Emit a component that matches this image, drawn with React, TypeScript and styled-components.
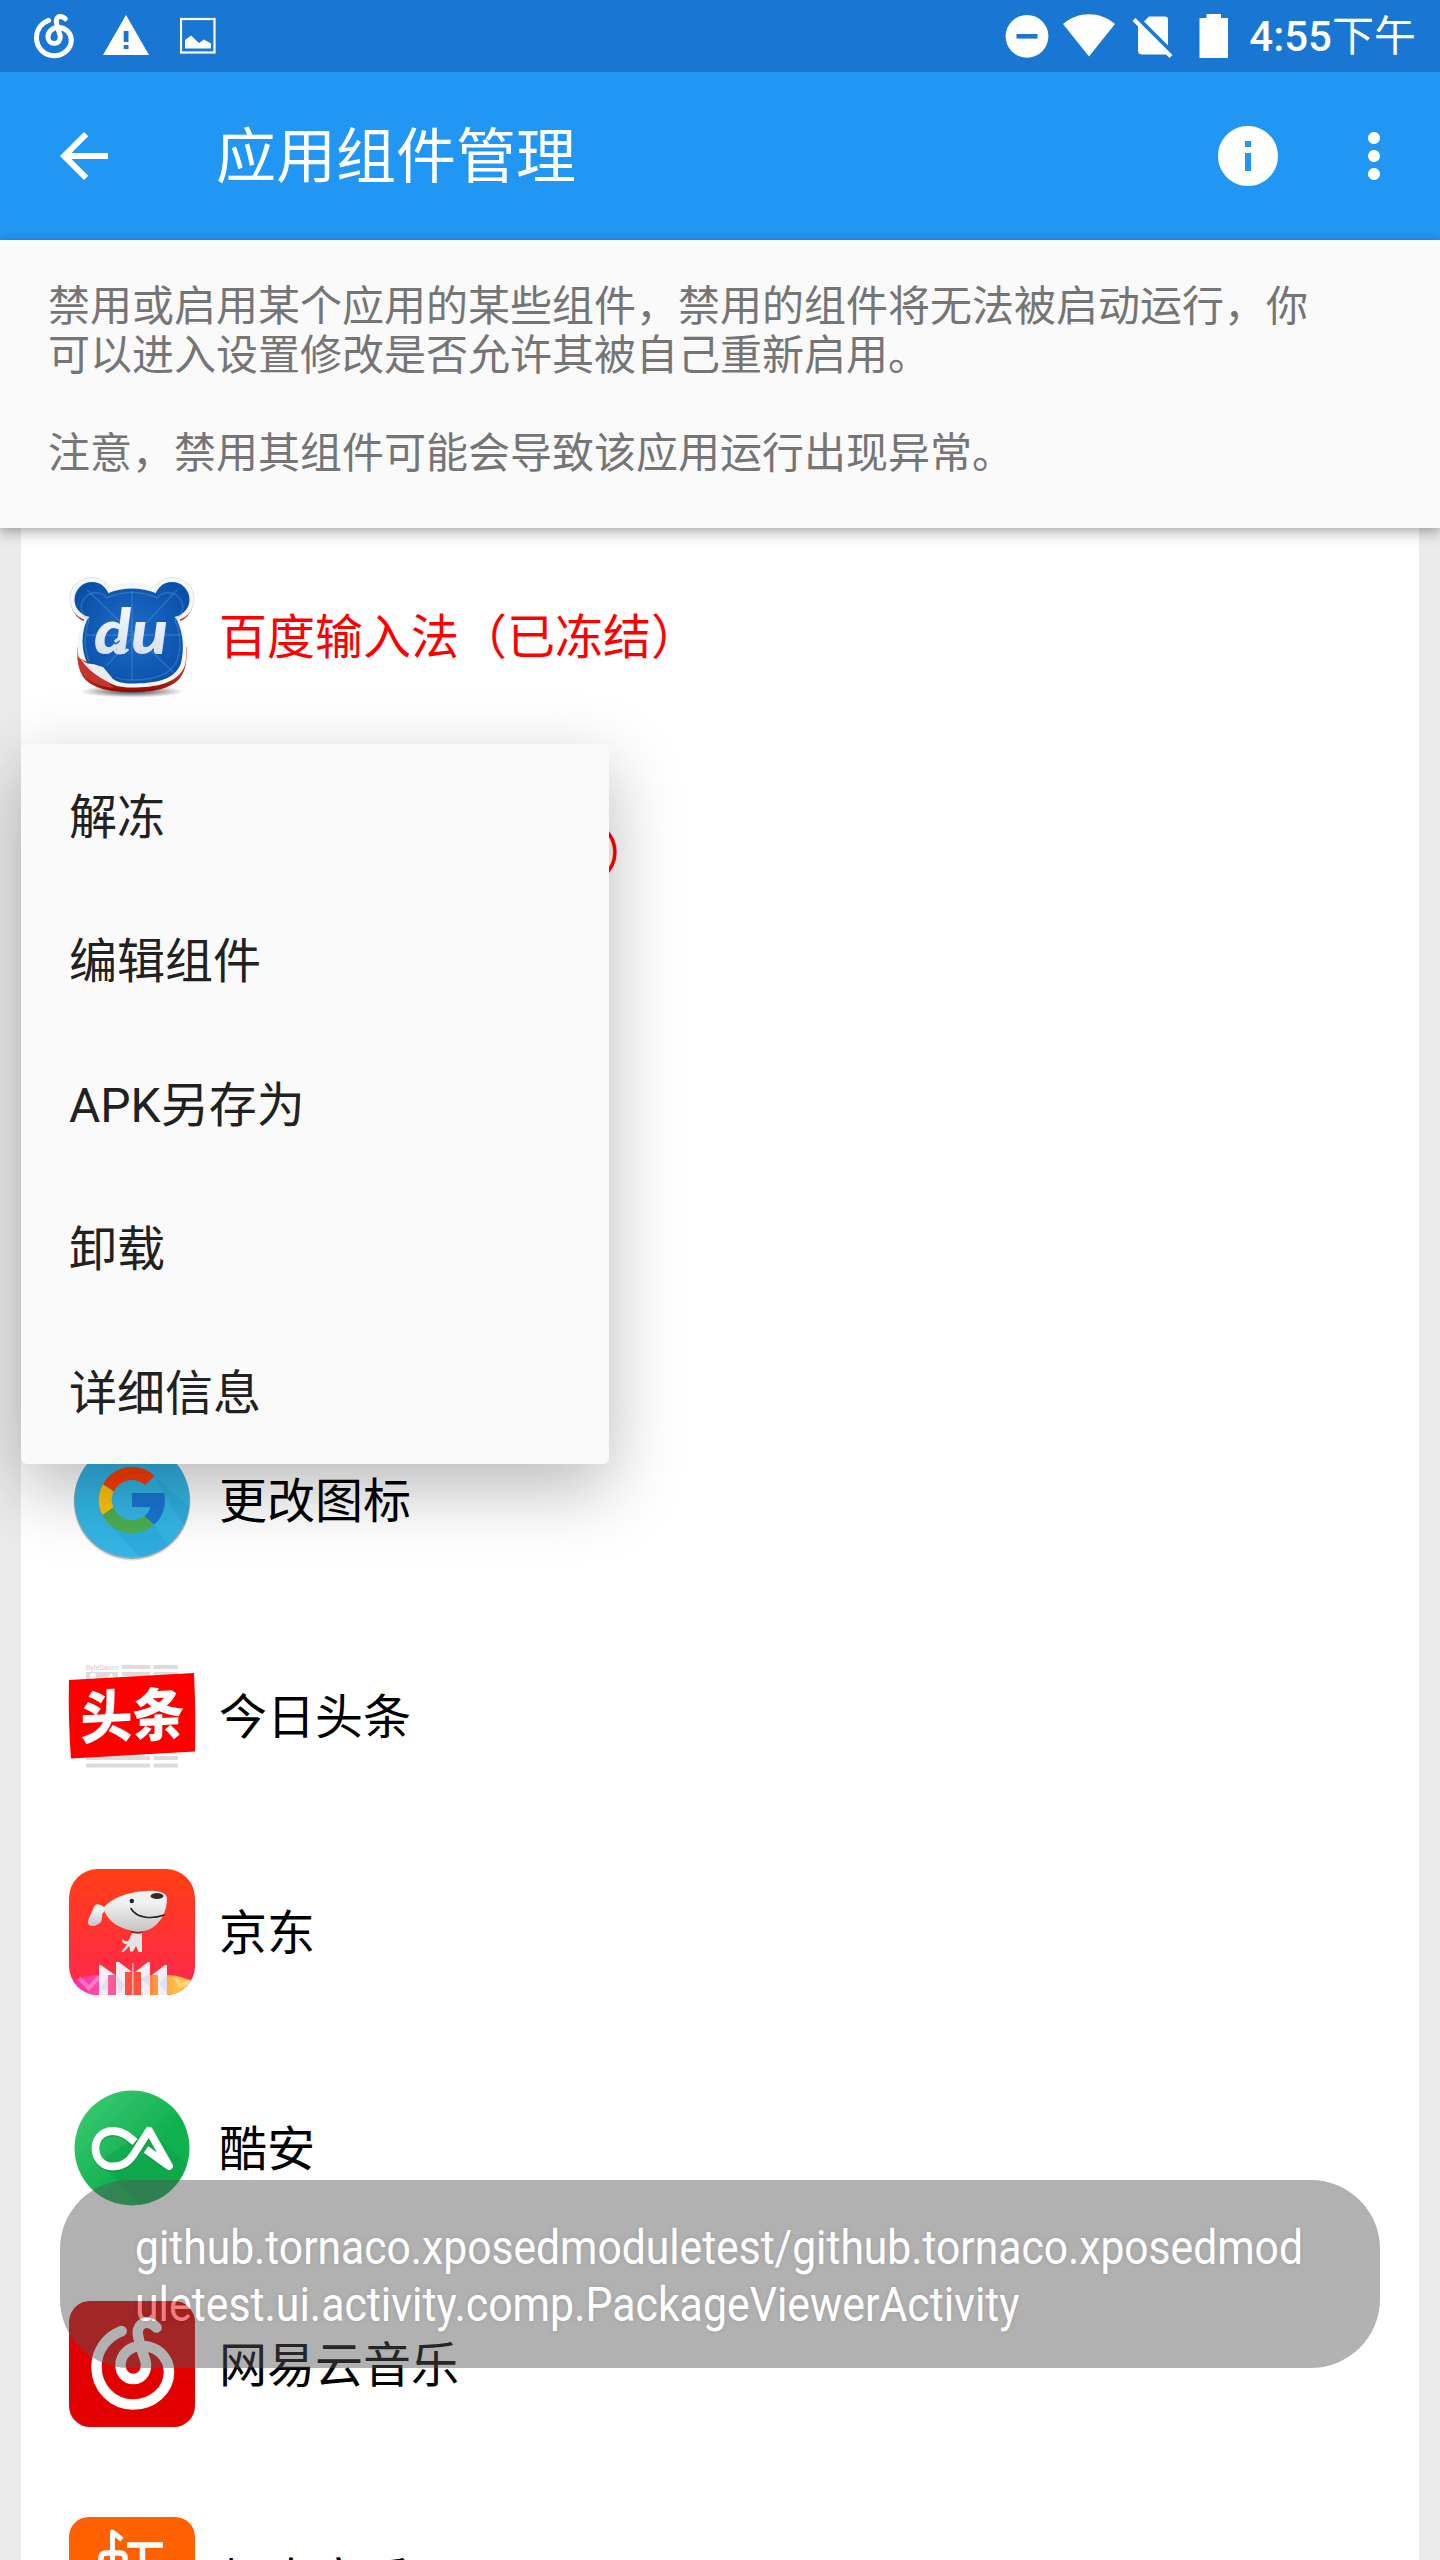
import React from "react";
import styled, { createGlobalStyle } from "styled-components";

const GlobalStyle = createGlobalStyle`
  * { box-sizing: border-box; }
  body { margin: 0; background: #ebebeb; }
`;

const Screen = styled.div`
  position: relative;
  display: flex;
  flex-direction: column;
  width: 1440px;
  height: 2560px;
  overflow: hidden;
  background: #ebebeb;
  font-family: Roboto, "Noto Sans CJK SC", sans-serif;
  color: #000;
`;

const StatusBar = styled.header`
  display: flex;
  flex: none;
  align-items: center;
  justify-content: space-between;
  height: 72px;
  padding: 0 24px 0 30px;
  background: #1976d2;
  color: #fff;
`;

const StatusGroup = styled.div<{ $gap: number }>`
  display: flex;
  align-items: center;
  gap: ${(p) => p.$gap}px;
`;

const Clock = styled.span`
  margin-left: 7px;
  padding-top: 2px;
  font-size: 42px;
  font-weight: 500;
  line-height: 72px;
  white-space: nowrap;
`;

const Meridiem = styled.span`
  font-weight: 400;
`;

const Toolbar = styled.nav`
  display: flex;
  flex: none;
  align-items: center;
  height: 168px;
  padding: 0 30px 0 48px;
  background: #2196f3;
  color: #fff;
`;

const Title = styled.h1`
  flex: 1;
  margin: 0 0 0 96px;
  padding-top: 4px;
  font-size: 60px;
  font-weight: 400;
  line-height: 72px;
`;

const Actions = styled.div`
  display: flex;
  gap: 54px;
`;

const Icon = styled.svg<{ $before?: number; $after?: number }>`
  display: block;
  flex: none;
  margin-left: ${(p) => p.$before ?? 0}px;
  margin-right: ${(p) => p.$after ?? 0}px;
  fill: currentColor;
`;

const Notice = styled.section`
  position: relative;
  z-index: 1;
  flex: none;
  height: 288px;
  padding: 42px 48px;
  background: #fafafa;
  box-shadow: 0 6px 12px rgba(0, 0, 0, 0.25), 0 0 6px rgba(0, 0, 0, 0.12);
  color: #757575;
  font-size: 42px;
  line-height: 49px;
`;

const Paragraph = styled.p`
  width: 1300px;
  margin: 0 0 49px;
`;

const List = styled.ul`
  flex: none;
  margin: 0 21px;
  padding: 0;
  background: #fff;
  list-style: none;
`;

const Row = styled.li`
  display: flex;
  align-items: center;
  gap: 24px;
  height: 216px;
  padding-left: 48px;
`;

const Label = styled.span<{ $frozen?: boolean; $indent?: number }>`
  padding-top: 4px;
  padding-left: ${(p) => p.$indent ?? 0}px;
  color: ${(p) => (p.$frozen ? "#ff0000" : "#000")};
  font-size: 48px;
  line-height: 56px;
  white-space: nowrap;
`;

const AppIcon = styled.svg`
  display: block;
  flex: none;
  width: 126px;
  height: 126px;
  overflow: visible;
`;

const Menu = styled.div`
  position: absolute;
  z-index: 2;
  top: 744px;
  left: 21px;
  width: 588px;
  border-radius: 6px;
  background: #fafafa;
  box-shadow: 0 24px 72px rgba(0, 0, 0, 0.28);
`;

const MenuItem = styled.div`
  display: flex;
  align-items: center;
  height: 144px;
  padding: 4px 48px 0;
  color: #212121;
  font-size: 48px;
  line-height: 56px;
`;

const Toast = styled.div`
  position: absolute;
  z-index: 3;
  top: 2180px;
  left: 60px;
  width: 1320px;
  height: 188px;
  padding: 39px 75px 35px;
  border-radius: 69px;
  background: rgba(85, 85, 85, 0.9);
  color: #fff;
  font-family: Roboto, sans-serif;
  font-size: 48px;
  line-height: 57px;
  text-shadow: 0 0 6px rgba(0, 0, 0, 0.4);
  opacity: 0.5;
`;

const ToastLine = styled.div<{ $squeeze: number }>`
  width: max-content;
  white-space: nowrap;
  transform: scaleX(${(p) => p.$squeeze});
  transform-origin: left;
`;

const cloudLoop =
  "M52.7 30 C37 36 27.5 50 27.5 66 C27.5 87 44 103.5 64 103.5 C84 103.5 100 89 100 71 C100 56 88 45 73 45 C60 45 51.5 54 51.5 64.5 C51.5 72 57 78 64.5 78 C72 78 77 72 77 64 C77 58 73 52 70.5 41 C69 35 68 32 69 29 C71 21 80 19 87.5 26.5";

const CloudMusicStatus = () => (
  <Icon width="48" height="48" viewBox="14 12.5 100 100">
    <path d={cloudLoop} fill="none" stroke="currentColor" strokeWidth="10.5" strokeLinecap="round" />
  </Icon>
);

const WarningStatus = () => (
  <Icon width="46" height="48" viewBox="0 0 46 48">
    <path fillRule="evenodd" d="M23 3 L46 43 H0Z M20.7 19 V30 H25.5 V19Z M20.7 33 V37 H25.5 V33Z" />
  </Icon>
);

const ImageStatus = () => (
  <Icon $before={6} width="36" height="48" viewBox="0 0 36 48">
    <rect x="1" y="7" width="33.5" height="33.5" fill="none" stroke="currentColor" strokeWidth="2.2" />
    <path d="M5 36.5 V28 L11 23.5 L19 31 L24 27.5 L31 31.5 V36.5Z" />
  </Icon>
);

const DoNotDisturb = () => (
  <Icon width="44" height="48" viewBox="0 0 44 48">
    <circle cx="22" cy="24.3" r="21.4" />
    <path d="M11.5 24.3 H32.5" stroke="#1976d2" strokeWidth="4.6" />
  </Icon>
);

const Wifi = () => (
  <Icon width="54" height="48" viewBox="0 0 54 48">
    <path d="M1 12 C16 -1 38 -1 53 12 L27 44.5Z" />
  </Icon>
);

const NoSim = () => (
  <Icon $before={3} $after={12} width="42" height="48" viewBox="0 0 42 48">
    <path d="M12 9.5 L17 4.5 H33 Q36 4.5 36 7.5 V33.5Z M6 14 L34.5 42.5 H10 Q6 42.5 6 38.5Z" />
    <path d="M2 7.5 L39 44.5" fill="none" stroke="currentColor" strokeWidth="4" />
  </Icon>
);

const Battery = () => (
  <Icon width="30" height="48" viewBox="0 0 30 48">
    <path d="M7.5 2 H22 V6 H29 V46 H.5 V6 H7.5Z" />
  </Icon>
);

const BaiduIcon = () => (
  <AppIcon viewBox="0 0 126 126">
    <defs>
      <radialGradient id="bdBlue" gradientUnits="userSpaceOnUse" cx="63" cy="58" r="64">
        <stop offset="0" stopColor="#1c6cc8" />
        <stop offset="1" stopColor="#0a4fa8" />
      </radialGradient>
      <linearGradient id="bdRed" x1="0" y1="0" x2="0" y2="1">
        <stop offset="0.6" stopColor="#c9302a" />
        <stop offset="1" stopColor="#920800" />
      </linearGradient>
      <linearGradient id="bdText" x1="0" y1="0" x2="0" y2="1">
        <stop offset="0" stopColor="#fff" />
        <stop offset="1" stopColor="#cfdcf0" />
      </linearGradient>
      <radialGradient id="bdShadow">
        <stop offset="0" stopColor="#000" stopOpacity="0.75" />
        <stop offset="1" stopColor="#000" stopOpacity="0" />
      </radialGradient>
    </defs>
    <ellipse cx="63" cy="118.5" rx="52" ry="6" fill="url(#bdShadow)" />
    <g fill="#b3201a">
      <circle cx="22.5" cy="29" r="20.5" />
      <circle cx="103.500" cy="29" r="20.5" />
    </g>
    <path d="M8.500 74 C8 88 9 97 15 105 C24 116 42 119 63 119 C84 119 102 116 111 105 C117 97 118 88 117.500 74Z" fill="url(#bdRed)" />
    <g fill="#f5f6f8">
      <circle cx="22.5" cy="26" r="22" fill="#dedede" />
      <circle cx="103.500" cy="26" r="22" fill="#dedede" />
      <circle cx="22.5" cy="26" r="21.3" />
      <circle cx="103.500" cy="26" r="21.3" />
      <path d="M41 13.500 C54 8.500 72 8.500 85 13.500 L111 47 C117 62 119 80 116 92 C109 111 86 114.500 63 114.500 C50 114.500 44 112 38 107 L28 97 L10.500 87 C6.500 74 8.500 60 15 47Z" />
    </g>
    <g fill="url(#bdBlue)">
      <circle cx="23" cy="26.500" r="17.500" />
      <circle cx="103" cy="26.500" r="17.500" />
      <path d="M39.500 20 C54 14 72 14 86.500 20 L108 47 C115 62 115 78 112 90 C106 108 84 110.500 63 110.500 C54 110.500 48 109 44 106 L34 94 L18 90 C12 76 12 60 18 47Z" />
    </g>
    <g fill="none" stroke="#5a9be0" strokeOpacity=".38" strokeWidth="1.4">
      <path d="M63 18 V107 M17 62 H112 M18 17 L105 100 M108 17 L38 92" />
      <path d="M20 47 A14.500 14.500 0 1 1 38 25 C54 18 72 18 88 25 A14.500 14.500 0 1 1 106 47 C112 62 112 76 108 87 C102 103 84 107 63 107 Q52 107 47 104 M20 47 C15 62 15 76 20 88" />
    </g>
    <path d="M8.500 84 C10 102 22 113 45 115 C37 107 27 100 24 92Z" fill="#c5342e" />
    <path d="M9 82 C17 96 30 106 50 114 C40 107 38 92 22 91 C17 91 13 88 9 82Z" fill="#e9ecf0" />
    <text x="25" y="81" fontFamily="Lato, sans-serif" fontStyle="italic" fontWeight="900" fontSize="63" textLength="74" lengthAdjust="spacingAndGlyphs" fill="url(#bdText)">du</text>
    <path d="M44 66 L53 67 L47 75Z" fill="#1763bd" />
    <path d="M46 69 Q50 64 53 67 Q52 71 47 73 Q44 80 51 80 Q57 79 59 76" fill="none" stroke="#dbe5f4" strokeWidth="3" />
  </AppIcon>
);

const GoogleIcon = () => (
  <AppIcon viewBox="-63 -63 126 126">
    <defs>
      <clipPath id="gClip">
        <circle r="57.5" />
      </clipPath>
    </defs>
    <circle cy="2" r="58.5" fill="#000" opacity=".12" />
    <circle cy="1" r="58" fill="#000" opacity=".25" />
    <circle r="57.5" fill="#33b5e5" />
    <path clipPath="url(#gClip)" d="M22 -24 L70 18 V70 H54 L22 24 L-24 24 L8 57 H70Z" fill="#2ba8d8" opacity=".6" />
    <path d="M-29 -15.8 A33 33 0 0 1 22.5 -24.2 L13.3 -15 A20 20 0 0 0 -18 -8.8Z" fill="#ff3d00" />
    <path d="M-29 -15.8 A33 33 0 0 0 -29.5 15 L-18.5 7.8 A20 20 0 0 1 -18.5 -8.2Z" fill="#ffc107" />
    <path d="M-29.5 15 A33 33 0 0 0 22.2 24.5 L12.5 16 A20 20 0 0 1 -18.5 7.3Z" fill="#4caf50" />
    <path d="M0 -7 H32.3 C34.5 6 31 17 22.2 24.5 L12.5 16.3 Q17 12.5 18.7 7 H0Z" fill="#1976d2" />
  </AppIcon>
);

const ToutiaoIcon = () => (
  <AppIcon viewBox="0 0 126 126">
    <text x="17" y="17" fontFamily="Roboto, sans-serif" fontSize="6.6" textLength="32.5" fill="#ccc">ByteDance</text>
    <path d="M53 12 H81 V16 H53Z M84.5 12 H109 V16 H84.5Z M17 19 H49 V30 H17Z M53 19 H81 V23 H53Z M84.5 19 H109 V23 H84.5Z M17 103 H81 V107 H17Z M84.5 103 H109 V107 H84.5Z M17 110.5 H81 V114.5 H17Z M84.5 110.5 H109 V114.5 H84.5Z" fill="#dcdcdc" />
    <circle cx="24" cy="23" r="3" fill="#fff" />
    <path d="M38 26 L42 20 L46 26Z" fill="#fff" />
    <path d="M0 27 L125 20 Q127 60 126 98.5 L2 105.5 Q-1 66 0 27Z" fill="#f00" />
    <text transform="translate(11.5 86) skewY(-2.5) scale(1 1.1)" fontFamily="'Noto Sans CJK SC', sans-serif" fontSize="52" fontWeight="900" textLength="104" fill="#fff">头条</text>
  </AppIcon>
);

const JdIcon = () => (
  <AppIcon viewBox="0 0 126 126">
    <defs>
      <linearGradient id="jdBg" x1="0" y1="0" x2="0" y2="1">
        <stop offset="0" stopColor="#ff3e14" />
        <stop offset="1" stopColor="#ff2850" />
      </linearGradient>
      <linearGradient id="jdHead" x1="0" y1="0" x2="0" y2="1">
        <stop offset="0.3" stopColor="#f1f1f1" />
        <stop offset="1" stopColor="#c4c4c4" />
      </linearGradient>
      <linearGradient id="jdFan" x1="0" y1="0" x2="1" y2="0">
        <stop offset="0" stopColor="#ff1fa8" />
        <stop offset="0.3" stopColor="#ff5ba8" />
        <stop offset="0.5" stopColor="#ff5040" />
        <stop offset="0.75" stopColor="#ffab40" />
        <stop offset="1" stopColor="#ffd250" />
      </linearGradient>
      <clipPath id="jdClip">
        <rect width="126" height="126" rx="29" />
      </clipPath>
    </defs>
    <rect width="126" height="126" rx="29" fill="url(#jdBg)" />
    <g clipPath="url(#jdClip)">
      <path d="M0 114 Q14 106 30 106 H98 Q112 106 126 114 V126 H0Z" fill="url(#jdFan)" />
      <path d="M56 103 H72 V126 H56Z" fill="#ff5040" />
      <path d="M10 109 L20 119 L30 108 M106 108 L111 117 L122 112" fill="none" stroke="#fff" strokeOpacity=".3" strokeWidth="4" />
      <path d="M30 96 L32 96 L46 106 H39 V126 H30Z M47 93 L50 93 L63 103 H56 V126 H47Z M81 93 L79 93 L66 103 H72 V126 H81Z M98 96 L96 96 L83 106 H89 V126 H98Z" fill="#f3eef4" />
      <path d="M47 93 V126 H56 V103Z M81 93 V126 H72 V103Z" fill="#f3eef4" />
      <path d="M63.8 94 V126" fill="none" stroke="#fff" strokeOpacity=".6" strokeWidth="1.5" />
      <path d="M30 120 L39 108 V121Z M47 106 L56 116 L50 125Z M72 110 L81 104 V118Z M90 115 L98 106 V124Z" fill="#dfe0ee" />
    </g>
    <path d="M35 38 C29 34 26 34 24 40 C22 46 19 49 19 54 C20 59 29 57 32 53 C34 49 32 45 35 43Z" fill="url(#jdHead)" />
    <path d="M34 39 C43 29 57 23 77 22 C88 21 97 23 98 29 C98 40 94 49 88 55 C80 63 70 64 60 61 C48 58 38 51 34 39Z" fill="url(#jdHead)" />
    <ellipse cx="88" cy="27" rx="6.5" ry="3" fill="#302c2c" />
    <circle cx="62.8" cy="32" r="2.2" fill="#222" />
    <path d="M62 39.5 C68 50 84 50 95 46" fill="none" stroke="#2b2020" strokeWidth="1.6" strokeLinecap="round" />
    <path d="M63 64 H73 V83 H69.5 L67 77 L64 82.5 H61 L60.5 77 L54.5 83 H52.5 L58 75 Q52 75 53.5 70 Q57 74 60 71Z" fill="#e4e4e4" />
    <path d="M62 62.5 Q68 65 73.5 63" fill="none" stroke="#b5141b" strokeWidth="1.6" />
  </AppIcon>
);

const coolapkStroke =
  "M66 57 C59 51 53 46 44 46 C34 46 26.5 53 26.5 63.5 C26.5 74 34 81.5 44 81.5 C53 81.5 60 77 65 69 L80 45.5 L100 81 L77 64.5";

const CoolapkIcon = () => (
  <AppIcon viewBox="0 0 126 126">
    <defs>
      <linearGradient id="caBg" x1="0" y1="0" x2="1" y2="1">
        <stop offset="0.1" stopColor="#37c871" />
        <stop offset="0.6" stopColor="#11b04f" />
        <stop offset="1" stopColor="#0fb04d" />
      </linearGradient>
      <clipPath id="caClip">
        <circle cx="63" cy="63" r="57.5" />
      </clipPath>
    </defs>
    <circle cx="63" cy="63" r="57.5" fill="url(#caBg)" />
    <path clipPath="url(#caClip)" d="M30 77 L52 62 L80 45 L126 86 V126 H76Z" fill="#0a9142" opacity=".3" />
    <path d={coolapkStroke} fill="none" stroke="#067a35" strokeOpacity=".35" strokeWidth="8" transform="translate(0 1.5)" />
    <path d={coolapkStroke} fill="none" stroke="#fff" strokeWidth="7.8" strokeLinejoin="round" />
  </AppIcon>
);

const CloudMusicIcon = () => (
  <AppIcon viewBox="0 0 126 126">
    <rect width="126" height="126" rx="21" fill="#e20000" />
    <path d={cloudLoop} fill="none" stroke="#fff" strokeWidth="10.5" strokeLinecap="round" />
  </AppIcon>
);

const XiamiIcon = () => (
  <AppIcon viewBox="0 0 126 126">
    <rect width="126" height="126" rx="20" fill="#ff6000" />
    <path d="M43.5 60 V15 L53 22.5" fill="none" stroke="#fff" strokeWidth="5" strokeLinejoin="round" />
    <path d="M32 62 V41 Q32 36 37 36 H51 Q56 36 56 41 V62 M58 28 H94 M73.5 28 V62" fill="none" stroke="#fff" strokeWidth="5.5" />
  </AppIcon>
);

const EmptyIcon = () => <AppIcon viewBox="0 0 126 126" />;

interface AppEntry {
  id: string;
  icon: React.ComponentType;
  name?: string;
  frozen?: boolean;
  indent?: number;
}

const apps: AppEntry[] = [
  { id: "baidu", icon: BaiduIcon, name: "百度输入法（已冻结）", frozen: true },
  { id: "frozen", icon: EmptyIcon, name: "（已冻结）", frozen: true, indent: 191 },
  { id: "empty-1", icon: EmptyIcon },
  { id: "empty-2", icon: EmptyIcon },
  { id: "icons", icon: GoogleIcon, name: "更改图标" },
  { id: "toutiao", icon: ToutiaoIcon, name: "今日头条" },
  { id: "jd", icon: JdIcon, name: "京东" },
  { id: "coolapk", icon: CoolapkIcon, name: "酷安" },
  { id: "netease", icon: CloudMusicIcon, name: "网易云音乐" },
  { id: "xiami", icon: XiamiIcon, name: "虾米音乐" },
];

const menuItems = ["解冻", "编辑组件", "APK另存为", "卸载", "详细信息"];

export default function App() {
  return (
    <>
      <GlobalStyle />
      <Screen>
        <StatusBar>
          <StatusGroup $gap={25}>
            <CloudMusicStatus />
            <WarningStatus />
            <ImageStatus />
          </StatusGroup>
          <StatusGroup $gap={13}>
            <DoNotDisturb />
            <Wifi />
            <NoSim />
            <Battery />
            <Clock>
              4:55<Meridiem>下午</Meridiem>
            </Clock>
          </StatusGroup>
        </StatusBar>
        <Toolbar>
          <Icon width="72" height="72" viewBox="0 0 24 24">
            <path d="M20 11H7.83l5.59-5.59L12 4l-8 8 8 8 1.41-1.41L7.83 13H20v-2z" />
          </Icon>
          <Title>应用组件管理</Title>
          <Actions>
            <Icon width="72" height="72" viewBox="0 0 24 24">
              <path d="M12 2C6.48 2 2 6.48 2 12s4.48 10 10 10 10-4.48 10-10S17.52 2 12 2zm1 15h-2v-6h2v6zm0-8h-2V7h2v2z" />
            </Icon>
            <Icon width="72" height="72" viewBox="0 0 24 24">
              <path d="M12 8c1.1 0 2-.9 2-2s-.9-2-2-2-2 .9-2 2 .9 2 2 2zm0 2c-1.1 0-2 .9-2 2s.9 2 2 2 2-.9 2-2-.9-2-2-2zm0 6c-1.1 0-2 .9-2 2s.9 2 2 2 2-.9 2-2-.9-2-2-2z" />
            </Icon>
          </Actions>
        </Toolbar>
        <Notice>
          <Paragraph>
            禁用或启用某个应用的某些组件，禁用的组件将无法被启动运行，你可以进入设置修改是否允许其被自己重新启用。
          </Paragraph>
          <Paragraph>注意，禁用其组件可能会导致该应用运行出现异常。</Paragraph>
        </Notice>
        <List>
          {apps.map(({ id, icon: Glyph, name, frozen, indent }) => (
            <Row key={id}>
              <Glyph />
              {name && (
                <Label $frozen={frozen} $indent={indent}>
                  {name}
                </Label>
              )}
            </Row>
          ))}
        </List>
        <Menu>
          {menuItems.map((item) => (
            <MenuItem key={item}>{item}</MenuItem>
          ))}
        </Menu>
        <Toast>
          <ToastLine $squeeze={0.8875}>github.tornaco.xposedmoduletest/github.tornaco.xposedmod</ToastLine>
          <ToastLine $squeeze={0.892}>uletest.ui.activity.comp.PackageViewerActivity</ToastLine>
        </Toast>
      </Screen>
    </>
  );
}
